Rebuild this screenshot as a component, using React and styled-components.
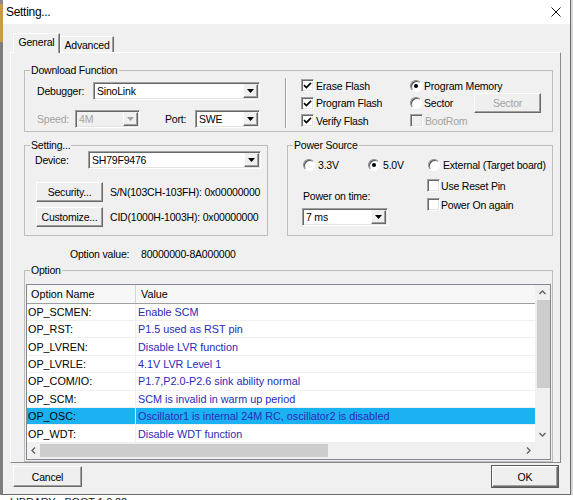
import styled, { createGlobalStyle } from "styled-components";

const GlobalStyle = createGlobalStyle`
  html, body {
    margin: 0;
    padding: 0;
    background: #fff;
  }
  body {
    width: 573px;
    height: 500px;
    overflow: hidden;
    font-family: "Liberation Sans", Arial, sans-serif;
    font-size: 10.5px;
    letter-spacing: -0.2px;
    color: #000;
  }
`;

const OPTIONS = [
  ["OP_SCMEN:", "Enable SCM"],
  ["OP_RST:", "P1.5 used as RST pin"],
  ["OP_LVREN:", "Disable LVR function"],
  ["OP_LVRLE:", "4.1V LVR Level 1"],
  ["OP_COM/IO:", "P1.7,P2.0-P2.6 sink ability normal"],
  ["OP_SCM:", "SCM is invalid in warm up period"],
  ["OP_OSC:", "Oscillator1 is internal 24M RC, oscillator2 is disabled"],
  ["OP_WDT:", "Disable WDT function"],
];
const SELECTED = 6;

function Combo({ value, width, disabled }) {
  return (
    <ComboBox $w={width} $disabled={disabled}>
      <ComboText>{value}</ComboText>
      <DropButton>
        <svg width="7" height="4" viewBox="0 0 7 4">
          <path d="M0 0h7L3.5 4z" fill={disabled ? "#a0a0a0" : "#000"} />
        </svg>
      </DropButton>
    </ComboBox>
  );
}

function Check({ checked, disabled }) {
  return (
    <CheckBox $disabled={disabled}>
      {checked && (
        <svg width="9" height="9" viewBox="0 0 9 9">
          <path d="M1 4.2 3.4 6.6 8 1.8" fill="none" stroke="#000" strokeWidth="1.7" />
        </svg>
      )}
    </CheckBox>
  );
}

function Radio({ checked }) {
  return <RadioBox>{checked && <Dot />}</RadioBox>;
}

function Chevron({ dir }) {
  const d = {
    up: "M0.5 4 3.5 1 6.5 4",
    down: "M0.5 1 3.5 4 6.5 1",
    left: "M4 0.5 1 3.5 4 6.5",
    right: "M1 0.5 4 3.5 1 6.5",
  }[dir];
  const vert = dir === "up" || dir === "down";
  return (
    <svg width={vert ? 7 : 5} height={vert ? 5 : 7} viewBox={vert ? "0 0 7 5" : "0 0 5 7"}>
      <path d={d} fill="none" stroke="#606060" strokeWidth="1.3" />
    </svg>
  );
}

export default function App() {
  return (
    <Screen>
      <GlobalStyle />
      <Desk>
        <LeftEdge />
        <Window>
          <TitleBar>
            <Title>Setting...</Title>
            <svg width="10" height="10" viewBox="0 0 10 10">
              <path d="M0.5 0.5 9.5 9.5M9.5 0.5 0.5 9.5" stroke="#111" strokeWidth="1" />
            </svg>
          </TitleBar>
          <Body>
            <Tabs>
              <Tab $active $w={47}>General</Tab>
              <Tab $w={54}>Advanced</Tab>
            </Tabs>
            <Panel>
              <Group>
                <Legend>Download Function</Legend>
                <DownloadBody>
                  <PortCol>
                    <FieldRow>
                      <Label $w={56}>Debugger:</Label>
                      <Combo value="SinoLink" width={167} />
                    </FieldRow>
                    <FieldRow>
                      <Label $w={38} $disabled>Speed:</Label>
                      <Combo value="4M" width={65} disabled />
                      <Label $w={30} $gap={25}>Port:</Label>
                      <Combo value="SWE" width={65} />
                    </FieldRow>
                  </PortCol>
                  <Separator />
                  <FlashArea>
                    <OptionCol $w={109}>
                      <OptRow><Check checked /><span>Erase Flash</span></OptRow>
                      <OptRow><Check checked /><span>Program Flash</span></OptRow>
                      <OptRow><Check checked /><span>Verify Flash</span></OptRow>
                    </OptionCol>
                    <OptionCol>
                      <OptRow><Radio checked /><span>Program Memory</span></OptRow>
                      <OptRow>
                        <RadioLabel><Radio /><span>Sector</span></RadioLabel>
                        <Button $w={67} $h={20} $disabled>Sector</Button>
                      </OptRow>
                      <OptRow $disabled><Check disabled /><span>BootRom</span></OptRow>
                    </OptionCol>
                  </FlashArea>
                </DownloadBody>
              </Group>

              <MidRow>
                <Group $w={244}>
                  <Legend>Setting...</Legend>
                  <SettingBody>
                    <FieldRow>
                      <Label $w={53}>Device:</Label>
                      <Combo value="SH79F9476" width={173} />
                    </FieldRow>
                    <ButtonRows>
                      <InfoRow>
                        <Button $w={67} $h={20}>Security...</Button>
                        <span>S/N(103CH-103FH): 0x00000000</span>
                      </InfoRow>
                      <InfoRow>
                        <Button $w={67} $h={20}>Customize...</Button>
                        <span>CID(1000H-1003H): 0x00000000</span>
                      </InfoRow>
                    </ButtonRows>
                  </SettingBody>
                </Group>
                <Group $w={266}>
                  <Legend>Power Source</Legend>
                  <VoltRow>
                    <VoltItem $w={65}><Radio /><span>3.3V</span></VoltItem>
                    <VoltItem $w={60}><Radio checked /><span>5.0V</span></VoltItem>
                    <VoltItem><Radio /><span>External (Target board)</span></VoltItem>
                  </VoltRow>
                  <PowerBottom>
                    <TimeCol>
                      <span>Power on time:</span>
                      <Combo value="7 ms" width={86} />
                    </TimeCol>
                    <ResetCol>
                      <ResetRow><Check /><span>Use Reset Pin</span></ResetRow>
                      <ResetRow><Check /><span>Power On again</span></ResetRow>
                    </ResetCol>
                  </PowerBottom>
                </Group>
              </MidRow>

              <ValueLine>
                <Label $w={71}>Option value:</Label>
                <span>80000000-8A000000</span>
              </ValueLine>

              <Group>
                <Legend>Option</Legend>
                <ListBox>
                  <ListContent>
                    <HeaderRow>
                      <HeaderCell $first>Option Name</HeaderCell>
                      <HeaderCell>Value</HeaderCell>
                    </HeaderRow>
                    {OPTIONS.map(([name, value], i) => (
                      <ListRow key={name} $selected={i === SELECTED}>
                        <NameCell>{name}</NameCell>
                        <ValueCell>{value}</ValueCell>
                      </ListRow>
                    ))}
                  </ListContent>
                  <VScroll>
                    <ArrowBox $v><Chevron dir="up" /></ArrowBox>
                    <VThumb />
                    <Spacer />
                    <ArrowBox $v><Chevron dir="down" /></ArrowBox>
                  </VScroll>
                  <HScroll>
                    <ArrowBox><Chevron dir="left" /></ArrowBox>
                    <HThumb />
                    <Spacer />
                    <ArrowBox><Chevron dir="right" /></ArrowBox>
                  </HScroll>
                  <Corner />
                </ListBox>
              </Group>
            </Panel>
            <Footer>
              <Button $w={69} $h={21}>Cancel</Button>
              <Button $w={66} $h={21} $default>OK</Button>
            </Footer>
          </Body>
        </Window>
        <RightEdge />
      </Desk>
      <Behind>LIBRARY - BOOT 1.0.22</Behind>
    </Screen>
  );
}

/* ---------- frame ---------- */
const Screen = styled.div`
  width: 573px;
  height: 500px;
  display: flex;
  flex-direction: column;
  background: #fff;
  overflow: hidden;
`;
const Desk = styled.div`
  display: flex;
  height: 495px;
  flex: none;
`;
const LeftEdge = styled.div`
  width: 3px;
  background: linear-gradient(#8c8c8c 0 4px, #c99a4c 4px 42px, #7d7d7d 42px);
`;
const RightEdge = styled.div`
  width: 2px;
  background: #d6d6d6;
`;
const Window = styled.div`
  width: 568px;
  box-sizing: border-box;
  border-right: 1px solid #6b6b6b;
  border-bottom: 1px solid #6b6b6b;
  background: #f0f0f0;
  display: flex;
  flex-direction: column;
`;
const TitleBar = styled.div`
  height: 24px;
  flex: none;
  background: #fff;
  display: flex;
  align-items: center;
  justify-content: space-between;
  padding: 0 9px 0 3px;
`;
const Title = styled.span`
  font-size: 12px;
  letter-spacing: -0.3px;
`;
const Body = styled.div`
  flex: 1;
  display: flex;
  flex-direction: column;
  padding: 9px 9px 0 7px;
`;
const Footer = styled.div`
  display: flex;
  justify-content: space-between;
  margin-top: 3px;
  padding: 0 3px;
`;
const Behind = styled.div`
  height: 5px;
  overflow: hidden;
  padding: 2px 0 0 10px;
  font-size: 11px;
  line-height: 11px;
  color: #222;
`;

/* ---------- tabs ---------- */
const Tabs = styled.div`
  height: 19px;
  display: flex;
  align-items: flex-end;
  padding-left: 3px;
  position: relative;
  z-index: 1;
`;
const Tab = styled.div`
  width: ${(p) => p.$w}px;
  height: ${(p) => (p.$active ? 20 : 16)}px;
  margin-bottom: ${(p) => (p.$active ? -1 : 0)}px;
  box-sizing: border-box;
  background: #f0f0f0;
  border-top: 1px solid #fff;
  border-left: 1px solid #fff;
  border-right: 1px solid #696969;
  box-shadow: inset -1px 0 0 #a0a0a0;
  display: flex;
  align-items: center;
  justify-content: center;
  padding-bottom: ${(p) => (p.$active ? 3 : 0)}px;
`;
const Panel = styled.div`
  height: 411px;
  flex: none;
  box-sizing: border-box;
  border: 1px solid;
  border-color: #fff #8a8a8a #8a8a8a #fff;
  padding: 11px 7px 0 13px;
  display: flex;
  flex-direction: column;
`;

/* ---------- group boxes ---------- */
const Group = styled.fieldset`
  margin: 0;
  padding: 0;
  min-width: 0;
  border: 1px solid #bdbdbd;
  ${(p) => (p.$w ? `width: ${p.$w}px; box-sizing: border-box;` : "")}
`;
const Legend = styled.legend`
  margin-left: 5px;
  padding: 0 1px;
  line-height: 12px;
  height: 12px;
`;
const MidRow = styled.div`
  display: flex;
  justify-content: space-between;
  margin-top: 7px;
`;

/* ---------- form parts ---------- */
const Label = styled.span`
  width: ${(p) => p.$w}px;
  flex: none;
  margin-left: ${(p) => p.$gap || 0}px;
  color: ${(p) => (p.$disabled ? "#a3a3a3" : "#000")};
`;
const FieldRow = styled.div`
  display: flex;
  align-items: center;
  height: 18px;
`;
const ComboBox = styled.div`
  width: ${(p) => p.$w}px;
  height: 18px;
  flex: none;
  box-sizing: border-box;
  display: flex;
  align-items: stretch;
  border: 1px solid;
  border-color: #a0a0a0 #fff #fff #a0a0a0;
  box-shadow: inset 1px 1px 0 #696969, inset -1px -1px 0 #e3e3e3;
  padding: 1px;
  background: ${(p) => (p.$disabled ? "#f0f0f0" : "#fff")};
  color: ${(p) => (p.$disabled ? "#a3a3a3" : "#000")};
`;
const ComboText = styled.span`
  flex: 1;
  padding-left: 2px;
  display: flex;
  align-items: center;
  white-space: nowrap;
`;
const DropButton = styled.div`
  width: 15px;
  box-sizing: border-box;
  background: #f0f0f0;
  border: 1px solid;
  border-color: #f0f0f0 #696969 #696969 #fff;
  box-shadow: inset -1px -1px 0 #a0a0a0;
  display: flex;
  align-items: center;
  justify-content: center;
`;
const Button = styled.div`
  width: ${(p) => p.$w}px;
  height: ${(p) => p.$h}px;
  flex: none;
  box-sizing: border-box;
  background: #efefef;
  border: 1px solid;
  border-color: #fff #696969 #696969 #fff;
  box-shadow: inset -1px -1px 0 #a0a0a0;
  outline: ${(p) => (p.$default ? "1px solid #5a5a5a" : "none")};
  display: flex;
  align-items: center;
  justify-content: center;
  color: ${(p) => (p.$disabled ? "#a3a3a3" : "#000")};
`;
const CheckBox = styled.div`
  width: 13px;
  height: 13px;
  flex: none;
  box-sizing: border-box;
  border: 1px solid;
  border-color: #a0a0a0 #fff #fff #a0a0a0;
  box-shadow: inset 1px 1px 0 #696969, inset -1px -1px 0 #e3e3e3;
  background: ${(p) => (p.$disabled ? "#f0f0f0" : "#fff")};
  display: flex;
  align-items: center;
  justify-content: center;
`;
const RadioBox = styled.div`
  width: 12px;
  height: 12px;
  flex: none;
  box-sizing: border-box;
  border-radius: 50%;
  border: 1px solid;
  border-color: #8a8a8a #fff #fff #8a8a8a;
  box-shadow: inset 1px 1px 0 #505050;
  background: #fff;
  display: flex;
  align-items: center;
  justify-content: center;
`;
const Dot = styled.div`
  width: 4px;
  height: 4px;
  border-radius: 50%;
  background: #000;
`;

/* ---------- download function ---------- */
const DownloadBody = styled.div`
  display: flex;
  height: 55px;
`;
const PortCol = styled.div`
  width: 260px;
  flex: none;
  box-sizing: border-box;
  padding: 6px 0 0 12px;
  display: flex;
  flex-direction: column;
  gap: 10px;
`;
const Separator = styled.div`
  width: 0;
  margin: 2px 0 3px;
  border-left: 1px solid #a0a0a0;
  border-right: 1px solid #fff;
`;
const FlashArea = styled.div`
  flex: 1;
  display: flex;
  padding: 1px 0 0 14px;
`;
const OptionCol = styled.div`
  ${(p) => (p.$w ? `width: ${p.$w}px;` : "flex: 1;")}
  display: grid;
  grid-auto-rows: 17.5px;
`;
const OptRow = styled.div`
  display: flex;
  align-items: center;
  gap: 2px;
  color: ${(p) => (p.$disabled ? "#a3a3a3" : "#000")};
`;
const RadioLabel = styled.div`
  width: 62px;
  display: flex;
  align-items: center;
  gap: 2px;
`;

/* ---------- setting ---------- */
const SettingBody = styled.div`
  height: 84px;
  box-sizing: border-box;
  padding: 0 0 0 10px;
  display: flex;
  flex-direction: column;
`;
const ButtonRows = styled.div`
  display: flex;
  flex-direction: column;
  gap: 5px;
  margin-top: 13px;
  padding-left: 1px;
`;
const InfoRow = styled.div`
  display: flex;
  align-items: center;
  gap: 7px;
  white-space: nowrap;
`;

/* ---------- power source ---------- */
const VoltRow = styled.div`
  display: flex;
  height: 14px;
  margin-top: 7px;
  padding-left: 15px;
`;
const VoltItem = styled.div`
  ${(p) => (p.$w ? `width: ${p.$w}px;` : "")}
  display: flex;
  align-items: center;
  gap: 3px;
  white-space: nowrap;
`;
const PowerBottom = styled.div`
  display: flex;
`;
const TimeCol = styled.div`
  width: 139px;
  box-sizing: border-box;
  padding: 17px 0 0 14px;
  display: flex;
  flex-direction: column;
  gap: 5px;
  line-height: 14px;
  & > span {
    padding-left: 1px;
  }
`;
const ResetCol = styled.div`
  padding-top: 4px;
  display: grid;
  grid-auto-rows: 19px;
`;
const ResetRow = styled.div`
  display: flex;
  align-items: center;
  gap: 1px;
`;

/* ---------- option list ---------- */
const ValueLine = styled.div`
  display: flex;
  line-height: 14px;
  margin: 11px 0 3px;
  padding-left: 46px;
`;
const ListBox = styled.div`
  margin: 8px 1px 1px;
  height: 176px;
  box-sizing: border-box;
  border: 1px solid #828790;
  background: #fff;
  display: grid;
  grid-template-columns: 1fr 15px;
  grid-template-rows: 1fr 17px;
  font-size: 10.8px;
  letter-spacing: 0;
`;
const ListContent = styled.div`
  overflow: hidden;
  display: flex;
  flex-direction: column;
`;
const HeaderRow = styled.div`
  height: 18.6px;
  flex: none;
  box-sizing: border-box;
  display: grid;
  grid-template-columns: 109px 1fr;
  background: #f7f7f7;
  border-bottom: 1px solid #a0a0a0;
`;
const HeaderCell = styled.div`
  display: flex;
  align-items: center;
  padding-left: ${(p) => (p.$first ? 4 : 5)}px;
  border-right: ${(p) => (p.$first ? "1px solid #d5d5d5" : "none")};
`;
const ListRow = styled.div`
  height: 17.4px;
  flex: none;
  box-sizing: border-box;
  display: grid;
  grid-template-columns: 109px 1fr;
  border-bottom: 1px solid #f0f0f0;
  background: ${(p) => (p.$selected ? "#1cb2f2" : "#fff")};
  white-space: nowrap;
`;
const NameCell = styled.div`
  display: flex;
  align-items: center;
  padding-left: 1px;
  border-right: 1px solid #f0f0f0;
`;
const ValueCell = styled.div`
  display: flex;
  align-items: center;
  padding-left: 2px;
  color: #2a2ab8;
`;
const VScroll = styled.div`
  background: #f0f0f0;
  display: flex;
  flex-direction: column;
`;
const HScroll = styled.div`
  background: #f0f0f0;
  display: flex;
  align-items: center;
`;
const Corner = styled.div`
  background: #f0f0f0;
`;
const ArrowBox = styled.div`
  width: ${(p) => (p.$v ? "auto" : "13px")};
  height: ${(p) => (p.$v ? "15px" : "100%")};
  flex: none;
  display: flex;
  align-items: center;
  justify-content: center;
`;
const VThumb = styled.div`
  height: 88px;
  margin: 0 0 0 2px;
  background: #cdcdcd;
`;
const HThumb = styled.div`
  width: 288px;
  height: 13px;
  background: #cdcdcd;
`;
const Spacer = styled.div`
  flex: 1;
`;
